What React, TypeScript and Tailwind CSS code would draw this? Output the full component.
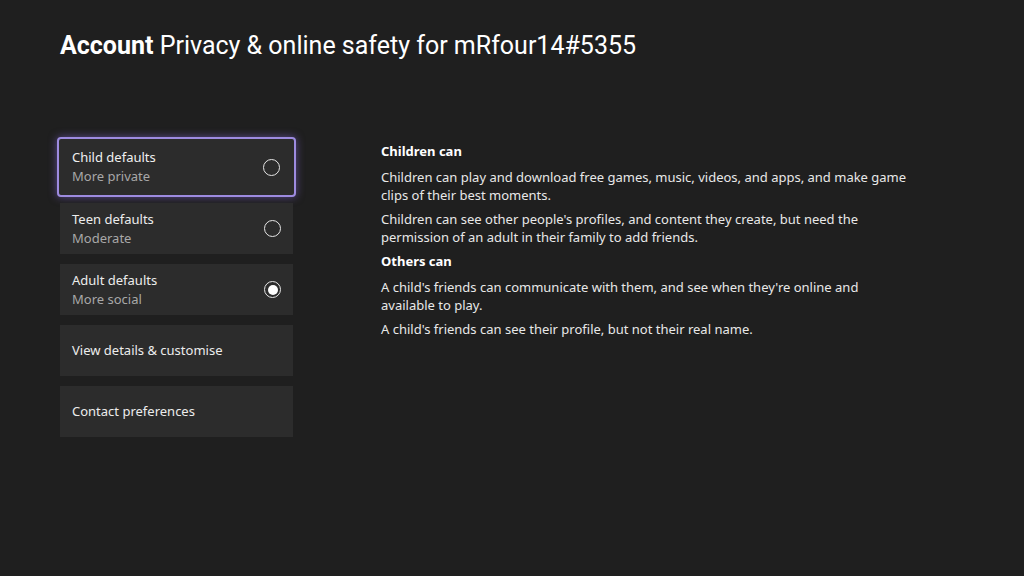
import React from "react";

type Option = { title: string; sub?: string; radio?: "off" | "on" };

const OPTIONS: Option[] = [
  { title: "Child defaults", sub: "More private", radio: "off" },
  { title: "Teen defaults", sub: "Moderate", radio: "off" },
  { title: "Adult defaults", sub: "More social", radio: "on" },
  { title: "View details & customise" },
  { title: "Contact preferences" },
];

function Radio({ on }: { on: boolean }) {
  return (
    <span className="flex h-[17px] w-[17px] items-center justify-center rounded-full border-[1.5px] border-[#e6e6e6]">
      {on && <span className="h-[10px] w-[10px] rounded-full bg-white" />}
    </span>
  );
}

export default function App() {
  return (
    <div
      className="h-[576px] w-[1024px] overflow-hidden bg-[#1f1f1f] text-[#e8e8e8]"
      style={{ fontFamily: '"Noto Sans", "Open Sans", sans-serif' }}
    >
      <h1
        className="pl-[60px] pt-[30px] text-[25px] leading-[32px] text-white"
        style={{ fontFamily: 'Roboto, "Liberation Sans", sans-serif' }}
      >
        <span className="font-bold">Account</span> Privacy &amp; online safety for mRfour14#5355
      </h1>

      <div className="mt-[75px] flex">
        <div className="ml-[60px] flex w-[233px] flex-col gap-[10px]">
          {OPTIONS.map((o, i) =>
            i === 0 ? (
              <div
                key={o.title}
                className="-mx-[3px] -mb-[4px] flex h-[60px] items-center justify-between rounded-[4px] border-2 border-[#9d8be0] bg-[#2c2c2c] pl-[13px] pr-[14px] shadow-[0_0_8px_rgba(140,110,230,0.55)]"
              >
                <div className="flex flex-col">
                  <span className="text-[13px] leading-[19px] text-[#f0f0f0]">{o.title}</span>
                  <span className="text-[13px] leading-[19px] text-[#a8a8a8]">{o.sub}</span>
                </div>
                <Radio on={false} />
              </div>
            ) : (
              <div
                key={o.title}
                className="flex h-[51px] items-center justify-between bg-[#2c2c2c] pl-[12px] pr-[12px]"
              >
                <div className="flex flex-col">
                  <span className="text-[13px] leading-[19px] text-[#ececec]">{o.title}</span>
                  {o.sub && <span className="text-[13px] leading-[19px] text-[#a8a8a8]">{o.sub}</span>}
                </div>
                {o.radio && <Radio on={o.radio === "on"} />}
              </div>
            )
          )}
        </div>

        <div className="ml-[88px] w-[530px] pt-[5px] text-[13px] leading-[18px]">
          <h2 className="font-bold text-white">Children can</h2>
          <p className="mt-[8px]">
            Children can play and download free games, music, videos, and apps, and make game clips of their best moments.
          </p>
          <p className="mt-[6px]">
            Children can see other people&apos;s profiles, and content they create, but need the permission of an adult in their family to add friends.
          </p>
          <h2 className="mt-[6px] font-bold text-white">Others can</h2>
          <p className="mt-[8px]">
            A child&apos;s friends can communicate with them, and see when they&apos;re online and available to play.
          </p>
          <p className="mt-[6px]">A child&apos;s friends can see their profile, but not their real name.</p>
        </div>
      </div>
    </div>
  );
}
